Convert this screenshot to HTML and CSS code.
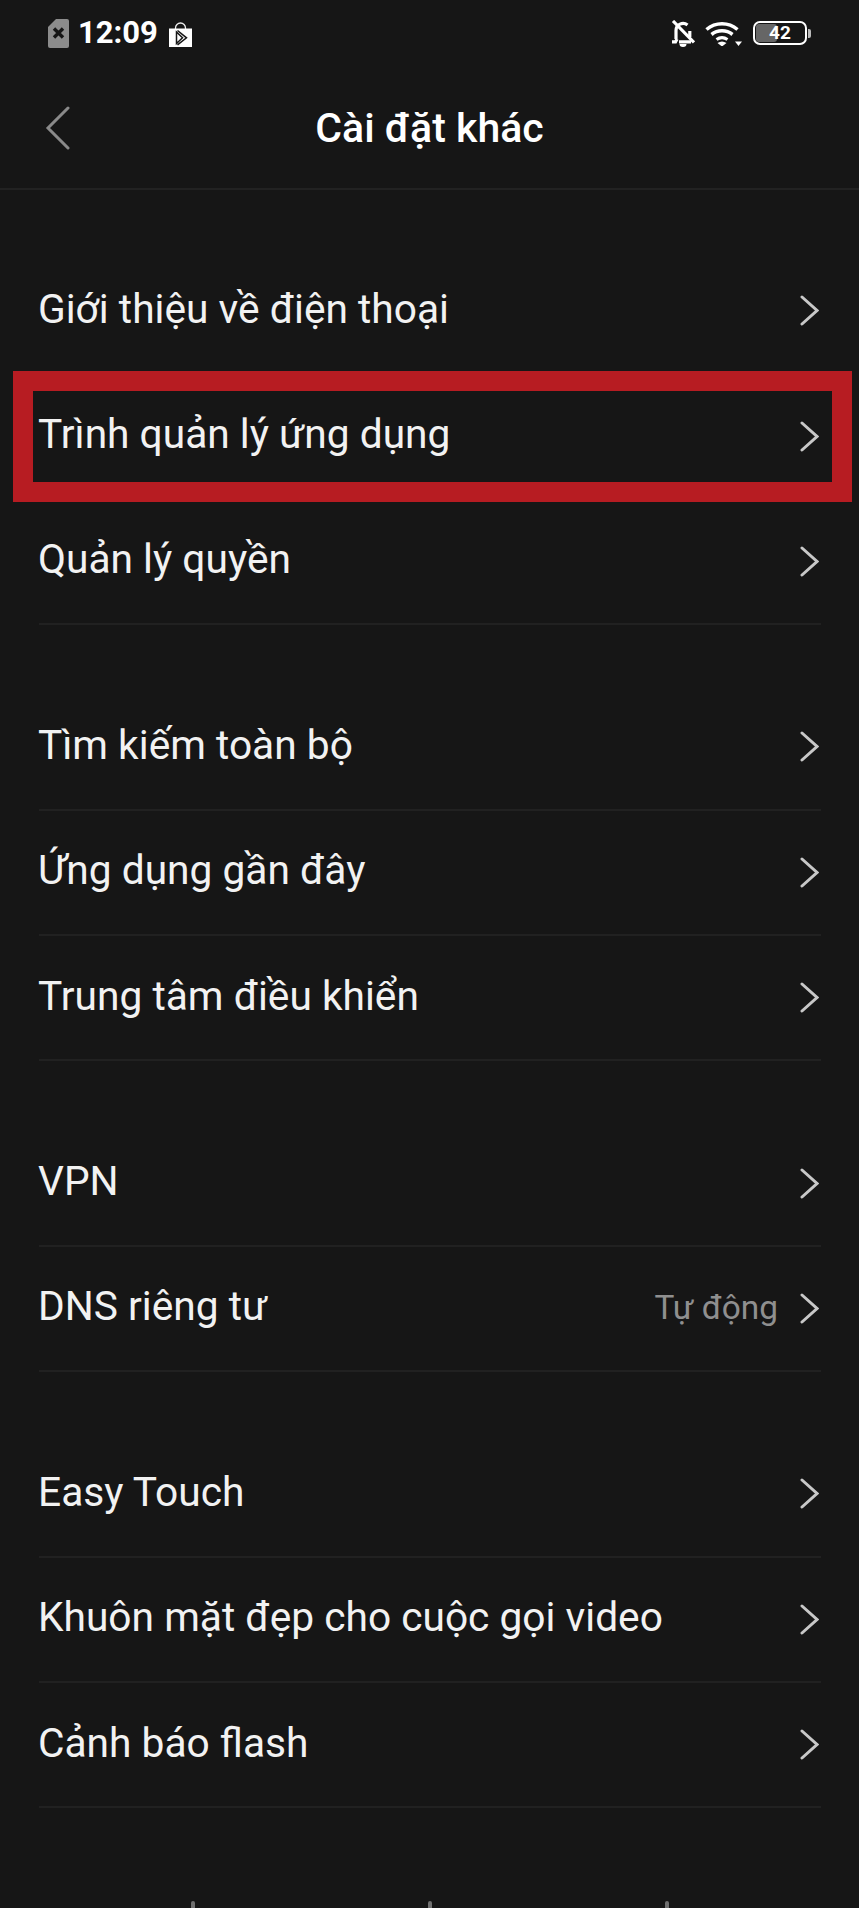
FILE: index.html
```html
<!DOCTYPE html>
<html lang="vi">
<head>
<meta charset="utf-8">
<title>Cài đặt khác</title>
<link rel="stylesheet" href="styles.css">
</head>
<body>
<div class="phone">
  <div class="status">
    <div class="status-left">
      <svg class="ic-sim" viewBox="0 0 21 29"><path d="M8 0h11a2 2 0 0 1 2 2v25a2 2 0 0 1-2 2H2a2 2 0 0 1-2-2V8z" fill="#8c8c8c"/><path d="M6 9.500l9 9m0-9l-9 9" stroke="#161616" stroke-width="3.400"/></svg>
      <span class="time">12:09</span>
      <svg class="ic-bag" viewBox="0 0 23 25"><path d="M6.500 7V6a5 5 0 0 1 10 0v1" fill="none" stroke="#eee" stroke-width="1.300"/><path d="M0 6.500h23V25H0z" fill="#fff"/><path d="M7.500 10v11.500l6-5.700zM8.500 8.500l9 7.300-9 7" fill="none" stroke="#161616" stroke-width="1.500"/></svg>
    </div>
    <div class="status-right">
      <svg class="ic-bell" viewBox="0 0 24 27"><path d="M5 19V10.500a7 7 0 0 1 11.500-5.400" fill="none" stroke="#fff" stroke-width="3.200"/><path d="M18.800 11v6" fill="none" stroke="#fff" stroke-width="3.200"/><path d="M1 21.800h3.500L6 19M8 21.800h12" fill="none" stroke="#fff" stroke-width="3.200"/><path d="M8.500 24a3.500 3 0 0 0 7 0z" fill="#fff"/><path d="M2 1l21 21.500" stroke="#fff" stroke-width="3.200"/></svg>
      <svg class="ic-wifi" viewBox="0 0 37 26"><path d="M1.500 9.500a24 24 0 0 1 31 0M6.500 14.500a17 17 0 0 1 21 0" fill="none" stroke="#fff" stroke-width="3.500"/><path d="M11.500 19.500a10 10 0 0 1 11 0" fill="none" stroke="#fff" stroke-width="3.200"/><path d="M12.500 23a8 8 0 0 1 9 0L17 26.500z" fill="#fff"/><path d="M30 21.500h7l-3.500 4.500z" fill="#fff"/></svg>
      <div class="battery">
        <div class="batt-body"><div class="batt-fill"></div><span class="batt-num">42</span></div>
        <div class="batt-tip"></div>
      </div>
    </div>
  </div>

  <header class="bar">
    <svg class="ic-back" viewBox="0 0 25 44"><path d="M23 2L3 22l20 20" fill="none" stroke="#8a8a8a" stroke-width="3" stroke-linecap="round"/></svg>
    <h1 class="title">Cài đặt khác</h1>
  </header>

  <main class="list">
    <section class="group">
      <div class="row"><span class="label">Giới thiệu về điện thoại</span><svg class="chev" viewBox="0 0 19 31"><path d="M2 2l15 13.500L2 29" /></svg></div>
      <div class="row"><span class="label">Trình quản lý ứng dụng</span><svg class="chev" viewBox="0 0 19 31"><path d="M2 2l15 13.500L2 29" /></svg></div>
      <div class="row"><span class="label">Quản lý quyền</span><svg class="chev" viewBox="0 0 19 31"><path d="M2 2l15 13.500L2 29" /></svg></div>
    </section>
    <section class="group">
      <div class="row"><span class="label">Tìm kiếm toàn bộ</span><svg class="chev" viewBox="0 0 19 31"><path d="M2 2l15 13.500L2 29" /></svg></div>
      <div class="row"><span class="label">Ứng dụng gần đây</span><svg class="chev" viewBox="0 0 19 31"><path d="M2 2l15 13.500L2 29" /></svg></div>
      <div class="row"><span class="label">Trung tâm điều khiển</span><svg class="chev" viewBox="0 0 19 31"><path d="M2 2l15 13.500L2 29" /></svg></div>
    </section>
    <section class="group">
      <div class="row"><span class="label">VPN</span><svg class="chev" viewBox="0 0 19 31"><path d="M2 2l15 13.500L2 29" /></svg></div>
      <div class="row"><span class="label">DNS riêng tư</span><span class="value">Tự động</span><svg class="chev" viewBox="0 0 19 31"><path d="M2 2l15 13.500L2 29" /></svg></div>
    </section>
    <section class="group">
      <div class="row"><span class="label">Easy Touch</span><svg class="chev" viewBox="0 0 19 31"><path d="M2 2l15 13.500L2 29" /></svg></div>
      <div class="row"><span class="label">Khuôn mặt đẹp cho cuộc gọi video</span><svg class="chev" viewBox="0 0 19 31"><path d="M2 2l15 13.500L2 29" /></svg></div>
      <div class="row"><span class="label">Cảnh báo flash</span><svg class="chev" viewBox="0 0 19 31"><path d="M2 2l15 13.500L2 29" /></svg></div>
    </section>
  </main>

  <div class="highlight"></div>
  <div class="nav-dots"><span class="dot"></span><span class="dot"></span><span class="dot"></span></div>
</div>
</body>
</html>
```
FILE: styles.css
```css
* { box-sizing: border-box; }
html, body { margin: 0; padding: 0; background: #161616; }
.phone {
  position: relative;
  width: 859px;
  height: 1908px;
  overflow: hidden;
  background: #161616;
  color: #fff;
  font-family: Roboto, "Noto Sans", sans-serif;
}
.status {
  height: 66px;
  padding: 0 48px;
  display: flex;
  align-items: center;
  justify-content: space-between;
}
.status-left, .status-right { display: flex; align-items: center; }
.ic-sim { width: 21px; height: 29px; margin-top: 1px; }
.time { font-size: 31px; font-weight: 700; margin-left: 9px; line-height: 36px; }
.ic-bag { width: 23px; height: 25px; margin-left: 11px; margin-top: 2px; }
.ic-bell { width: 24px; height: 27px; }
.ic-wifi { width: 37px; height: 26px; margin-left: 10px; }
.battery { display: flex; align-items: center; margin-left: 11px; }
.batt-body {
  position: relative;
  width: 54px;
  height: 24px;
  border: 2.5px solid #fff;
  border-radius: 7px;
  overflow: hidden;
  display: flex;
  align-items: center;
  justify-content: center;
}
.batt-fill { position: absolute; left: 1px; top: 1px; bottom: 1px; width: 42%; background: #666; border-radius: 3px; }
.batt-num { position: relative; font-size: 19px; font-weight: 700; line-height: 20px; }
.batt-tip { width: 3px; height: 9px; background: #bbb; border-radius: 0 2px 2px 0; margin-left: 1px; }
.bar {
  position: relative;
  height: 124px;
  border-bottom: 2px solid #222;
  display: flex;
  align-items: center;
  justify-content: center;
}
.ic-back { position: absolute; left: 45px; top: 40px; width: 25px; height: 44px; }
.title { margin: 2px 0 0; font-size: 41px; font-weight: 500; line-height: 48px; }
.list { padding: 59px 38px 0 39px; display: flex; flex-direction: column; gap: 60px; }
.row {
  height: 125.4px;
  display: flex;
  align-items: center;
  border-bottom: 2px solid #212121;
}
.label { font-size: 40.7px; color: #f2f2f2; flex: 1; line-height: 48px; margin-bottom: 4px; margin-left: -1px; }
.value { font-size: 33.4px; color: #8f8f8f; margin-right: 22px; line-height: 40px; }
.chev { width: 19px; height: 31px; margin-right: 2px; fill: none; stroke: #c8c8c8; stroke-width: 3; stroke-linecap: round; }
.highlight {
  position: absolute;
  left: 13px;
  top: 371px;
  width: 839px;
  height: 131px;
  border: 20px solid #b71c22;
}
.nav-dots { position: absolute; top: 1901px; left: 191px; width: 478px; display: flex; justify-content: space-between; }
.dot { width: 4px; height: 10px; border-radius: 2px; background: #707070; }
```
